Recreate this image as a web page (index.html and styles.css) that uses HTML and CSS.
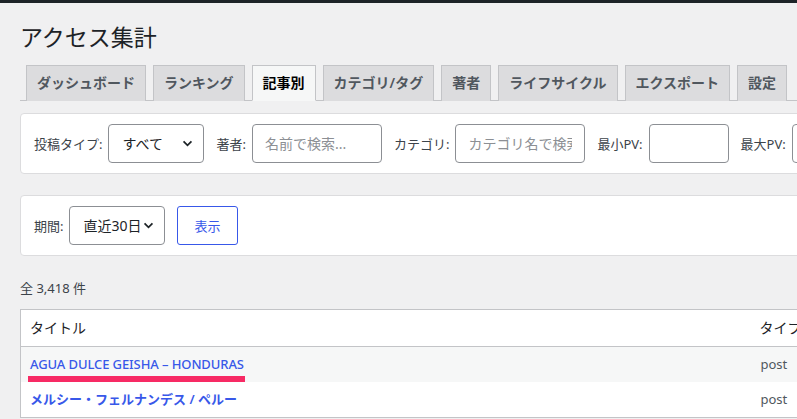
FILE: index.html
```html
<!DOCTYPE html>
<html lang="ja">
<head>
<meta charset="UTF-8" />
<meta name="viewport" content="width=device-width, initial-scale=1" />
<title>アクセス集計</title>
<link rel="stylesheet" href="styles.css">
</head>
<body>
<div class="adminbar"></div>
<div class="wrap">
  <h1>アクセス集計</h1>

  <!-- page tabs -->
  <nav class="tabs">
    <a class="tab" href="#">ダッシュボード</a>
    <a class="tab" href="#">ランキング</a>
    <a class="tab active" href="#">記事別</a>
    <a class="tab" href="#">カテゴリ/タグ</a>
    <a class="tab" href="#">著者</a>
    <a class="tab" href="#">ライフサイクル</a>
    <a class="tab" href="#">エクスポート</a>
    <a class="tab" href="#">設定</a>
  </nav>

  <!-- filters -->
  <div class="card">
    <div class="field">
      <label>投稿タイプ:</label>
      <div class="select">
        <select><option>すべて</option><option>post</option><option>page</option></select>
        <svg viewBox="0 0 12 8" width="11" height="7"><path d="M1.5 1.5l4.5 4.5 4.5-4.5" fill="none" stroke="#1d2327" stroke-width="2"/></svg>
      </div>
    </div>
    <div class="field">
      <label>著者:</label>
      <input type="text" placeholder="名前で検索...">
    </div>
    <div class="field">
      <label>カテゴリ:</label>
      <input type="text" placeholder="カテゴリ名で検索...">
    </div>
    <div class="field">
      <label>最小PV:</label>
      <input type="text" class="num">
    </div>
    <div class="field">
      <label>最大PV:</label>
      <input type="text" class="num">
    </div>
  </div>

  <div class="card">
    <div class="field">
      <label>期間:</label>
      <div class="select">
        <select><option>直近30日</option><option>直近7日</option><option>直近90日</option></select>
        <svg viewBox="0 0 12 8" width="11" height="7"><path d="M1.5 1.5l4.5 4.5 4.5-4.5" fill="none" stroke="#1d2327" stroke-width="2"/></svg>
      </div>
    </div>
    <button class="btn">表示</button>
  </div>

  <p class="count">全 3,418 件</p>

  <table class="list">
    <colgroup><col class="col-title"><col></colgroup>
    <thead>
      <tr><th>タイトル</th><th>タイプ</th></tr>
    </thead>
    <tbody>
      <tr class="alt">
        <td><a href="#" class="mark latin">AGUA DULCE GEISHA – HONDURAS</a></td>
        <td class="type">post</td>
      </tr>
      <tr>
        <td><a href="#">メルシー・フェルナンデス / ペルー</a></td>
        <td class="type">post</td>
      </tr>
    </tbody>
  </table>
</div>
</body>
</html>
```

FILE: styles.css
```css
body { margin: 0; background: #f0f0f1; color: #3c434a; font-family: "Noto Sans", "Noto Sans CJK JP", sans-serif; font-size: 13px; overflow: hidden; }
.adminbar { height: 3px; background: #1d2327; }
.wrap { padding-left: 20px; width: 1100px; }
h1 { margin: 0; padding-top: 19px; font-size: 23px; font-weight: 400; line-height: 30px; color: #1d2327; }

.tabs { display: flex; margin-top: 13px; padding-left: 6px; border-bottom: 1px solid #c3c4c7; }
.tab { display: block; margin-left: 7px; margin-bottom: -1px; padding: 5px 10px; font-size: 14px; line-height: 24px; font-weight: 600; color: #50575e; text-decoration: none; background: #dcdcde; border: 1px solid #c3c4c7; border-bottom: none; }
.tab:first-child { margin-left: 0; }
.tab.active { background: #f6f7f7; color: #000; border-bottom: 1px solid #f6f7f7; }

.card { display: flex; align-items: center; gap: 12px; margin-top: 12px; padding: 10px 13px; background: #fff; border: 1px solid #dcdcde; border-radius: 4px; }
.card + .card { margin-top: 21px; }
.field { display: flex; align-items: center; gap: 6px; }
.field label { line-height: 20px; }

.select { position: relative; }
.select select { appearance: none; -webkit-appearance: none; width: 96px; height: 39px; padding: 0 0 0 13px; font: inherit; font-size: 14px; color: #1d2327; background: #fff; border: 1px solid #8c8f94; border-radius: 4px; }
.select svg { position: absolute; right: 11px; top: 16px; pointer-events: none; }

input { box-sizing: border-box; width: 130px; height: 39px; padding: 0 12px; font: inherit; font-size: 14px; color: #1d2327; border: 1px solid #8c8f94; border-radius: 4px; }
input::placeholder { color: #8c8f94; }
input.num { width: 80px; }

.btn { height: 39px; padding: 0 16px; font: inherit; font-size: 13px; color: #3858e9; background: #fff; border: 1px solid #3858e9; border-radius: 3px; cursor: pointer; }

.count { margin: 22px 0 11px; line-height: 20px; color: #3c434a; }

.list { width: 100%; table-layout: fixed; border-collapse: collapse; background: #fff; border: 1px solid #c3c4c7; }
.col-title { width: 730px; }
.list th { padding: 8px 9px; font-size: 14px; font-weight: 400; line-height: 20px; text-align: left; color: #1d2327; border-bottom: 1px solid #c3c4c7; }
.list td { padding: 8px 9px; line-height: 19px; vertical-align: top; }
.list td.type { padding-left: 10px; color: #50575e; }
.list tr.alt { background: #f6f7f7; }
.list a { font-size: 13px; font-weight: 600; color: #3858e9; text-decoration: none; }
.list a.latin { font-weight: 500; letter-spacing: -0.1px; }

/* highlighted title */
.mark { position: relative; }
.mark::after { content: ""; position: absolute; left: -2px; right: -1px; bottom: -9px; height: 6px; background: #f72a64; }
```
